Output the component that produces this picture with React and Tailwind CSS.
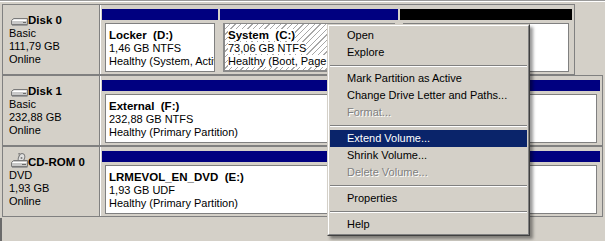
import React from "react";

const FONT = "font-['Liberation_Sans',Arial,sans-serif]";

function DiskIcon() {
  return (
    <svg width="17" height="10" viewBox="0 0 17 10" className="shrink-0">
      <path d="M0.5 3.5 L2.5 1.5 L16.5 1.5 L16.5 7.5 L0.5 7.5 Z" fill="#c8c8c8" stroke="#7a7a7a" />
      <path d="M1.5 3.5 L15.5 3.5" stroke="#ffffff" />
      <path d="M3 2.5 L15.5 2.5" stroke="#e8e8e8" />
      <path d="M12 5.5 L15 5.5" stroke="#6a6a6a" />
      <path d="M1 8.5 L16.5 8.5" stroke="#9a9a9a" />
    </svg>
  );
}

function CdIcon() {
  return (
    <svg width="17" height="16" viewBox="0 0 17 16" className="shrink-0">
      <ellipse cx="10.5" cy="5" rx="3" ry="4.5" fill="#e0e0e0" stroke="#7a7a7a" transform="rotate(20 10.5 5)" />
      <circle cx="10.5" cy="5" r="1" fill="#7a7a7a" />
      <path d="M7 1 L9 0.5" stroke="#7a7a7a" />
      <path d="M0.5 9.5 L2.5 7.5 L16.5 7.5 L16.5 13.5 L0.5 13.5 Z" fill="#c8c8c8" stroke="#7a7a7a" />
      <path d="M1.5 9.5 L15.5 9.5" stroke="#ffffff" />
      <path d="M11 11.5 L15 11.5" stroke="#6a6a6a" />
      <path d="M1 14.5 L16.5 14.5" stroke="#9a9a9a" />
    </svg>
  );
}

function Label({ icon, title, lines }) {
  return (
    <div className="w-[97px] shrink-0 border-r border-[#808080] pl-[6px] pt-[8px] text-[11px] leading-[13px] text-black">
      <div className="flex items-end h-[14px] pl-[2px]">
        {icon}
        <span className="font-bold text-[11.5px] leading-[13px] whitespace-nowrap">{title}</span>
      </div>
      {lines.map((l) => (
        <div key={l} className="whitespace-nowrap">{l}</div>
      ))}
    </div>
  );
}

function Partition({ width, bar, title, lines, hatched }) {
  return (
    <div className="flex flex-col shrink-0" style={{ width }}>
      <div className={`h-[11px] ${bar}`} />
      <div
        className={`mx-[3px] mt-[3px] h-[49px] overflow-hidden px-[3px] pt-[5px] text-[11px] leading-[13px] text-black ${
          hatched
            ? "border border-l-2 border-b-2 border-[#8a8a8a] bg-[repeating-linear-gradient(135deg,#ffffff_0px,#ffffff_3px,#a8a8a8_3px,#a8a8a8_4px)]"
            : "border border-[#808080] bg-white"
        }`}
      >
        {title && (
          <div className="whitespace-pre">
            <span className={`font-bold text-[11.5px] ${hatched ? "bg-white" : ""}`}>{title}</span>
          </div>
        )}
        {lines &&
          lines.map((l) => (
            <div key={l} className="whitespace-nowrap">
              <span className={hatched ? "bg-white" : ""}>{l}</span>
            </div>
          ))}
      </div>
    </div>
  );
}

function Row({ label, children, areaWidth }) {
  return (
    <div className="flex h-[71px] border border-r-0 border-[#808080]">
      {label}
      <div
        className="flex gap-[2px] border-r border-[#808080] border-l border-l-white pl-[1px] pr-[2px] pt-[4px] pb-[2px] bg-[#d4d0c8]"
        style={{ width: areaWidth }}
      >
        {children}
      </div>
    </div>
  );
}

function Item({ children, disabled, active }) {
  return (
    <div
      className={`h-[17px] flex items-center pl-[17px] whitespace-nowrap text-[11px] ${
        active
          ? "bg-[#0a246a] text-white"
          : disabled
          ? "text-[#808080] [text-shadow:1px_1px_0_#ffffff]"
          : "text-black"
      }`}
    >
      {children}
    </div>
  );
}

function Sep() {
  return (
    <div className="h-[9px] flex items-center">
      <div className="w-full h-[2px] border-t border-[#808080] border-b border-b-white" />
    </div>
  );
}

export default function App() {
  return (
    <div className={`${FONT} relative w-[605px] h-[241px] overflow-hidden bg-[#d4d0c8] border-t border-[#9a9a9a] flex flex-col`}>
      <div className="h-[1px] bg-white shrink-0" />
      <div className="pt-[2px] pl-[2px] flex flex-col shrink-0">
        <div className="w-[573px]">
          <Row
            areaWidth={475}
            label={<Label icon={<DiskIcon />} title="Disk 0" lines={["Basic", "111,79 GB", "Online"]} />}
          >
            <Partition width={116} bar="bg-[#000080]" title="Locker  (D:)" lines={["1,46 GB NTFS", "Healthy (System, Active, Primary Partition)"]} />
            <Partition width={178} bar="bg-[#000080]" hatched title="System  (C:)" lines={["73,06 GB NTFS", "Healthy (Boot, Page File, Primary Partition)"]} />
            <Partition width={172} bar="bg-black" />
          </Row>
        </div>
        <div className="w-[601px]">
          <Row
            areaWidth={503}
            label={<Label icon={<DiskIcon />} title="Disk 1" lines={["Basic", "232,88 GB", "Online"]} />}
          >
            <Partition width={498} bar="bg-[#000080]" title="External  (F:)" lines={["232,88 GB NTFS", "Healthy (Primary Partition)"]} />
          </Row>
        </div>
        <div className="w-[601px]">
          <Row
            areaWidth={503}
            label={<Label icon={<CdIcon />} title="CD-ROM 0" lines={["DVD", "1,93 GB", "Online"]} />}
          >
            <Partition width={498} bar="bg-[#000080]" title="LRMEVOL_EN_DVD  (E:)" lines={["1,93 GB UDF", "Healthy (Primary Partition)"]} />
          </Row>
        </div>
      </div>
      <div className="flex-1 border-l-2 border-[#6b6b6b] mt-[1px]" />

      <div className="absolute left-[327px] top-[23px] w-[203px] border border-t-[#d4d0c8] border-l-[#d4d0c8] border-r-[#404040] border-b-[#404040] shadow-[3px_3px_3px_rgba(0,0,0,0.4)]">
        <div className="border border-t-white border-l-white border-r-[#808080] border-b-[#808080] bg-[#d4d0c8] p-[1px]">
          <Item>Open</Item>
          <Item>Explore</Item>
          <Sep />
          <Item>Mark Partition as Active</Item>
          <Item>Change Drive Letter and Paths...</Item>
          <Item disabled>Format...</Item>
          <Sep />
          <Item active>Extend Volume...</Item>
          <Item>Shrink Volume...</Item>
          <Item disabled>Delete Volume...</Item>
          <Sep />
          <Item>Properties</Item>
          <Sep />
          <Item>Help</Item>
        </div>
      </div>
    </div>
  );
}
